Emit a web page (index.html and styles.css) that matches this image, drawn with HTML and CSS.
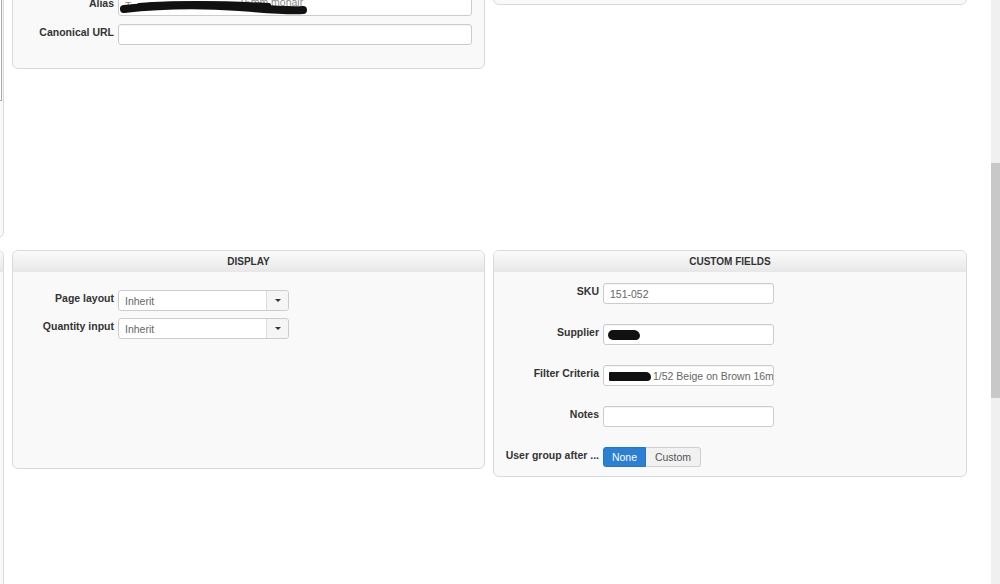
FILE: index.html
```html
<!DOCTYPE html>
<html lang="en">

<head>
  <meta charset="UTF-8">
  <meta name="viewport" content="width=device-width, initial-scale=1.0">
  <title>Product settings</title>
  <link rel="stylesheet" href="styles.css">
</head>

<body>
  <div class="page">
    <!-- top row: panels are scrolled partly out of view -->
    <div class="columns row-top">
      <div class="panel panel-stub-top">
        <div class="stub-textarea"></div>
      </div>

      <div class="panel panel-seo">
        <div class="field">
          <label class="field-label">Alias</label>
          <div class="input input-wide">
            <span class="faint">Tan</span>
            <span class="faint alias-tail">16mm mohair</span>
            <svg class="scribble" width="190" height="20" viewBox="0 0 190 20">
              <path d="M5 13 C 40 9, 80 8, 120 11 S 168 15, 184 14" stroke="#111" stroke-width="8" fill="none" stroke-linecap="round" />
              <path d="M20 9 C 60 6, 110 7, 150 9" stroke="#111" stroke-width="4" fill="none" stroke-linecap="round" />
            </svg>
          </div>
        </div>
        <div class="field">
          <label class="field-label">Canonical URL</label>
          <div class="input input-wide"></div>
        </div>
      </div>

      <div class="panel panel-right-top"></div>
    </div>

    <!-- bottom row -->
    <div class="columns row-bottom">
      <div class="panel panel-stub-bottom">
        <div class="panel-header"></div>
      </div>

      <div class="panel panel-display">
        <div class="panel-header">DISPLAY</div>
        <div class="panel-body display-body">
          <div class="field field-tight">
            <label class="field-label">Page layout</label>
            <div class="select">
              <span class="select-value">Inherit</span>
              <span class="select-caret"></span>
            </div>
          </div>
          <div class="field field-tight">
            <label class="field-label">Quantity input</label>
            <div class="select">
              <span class="select-value">Inherit</span>
              <span class="select-caret"></span>
            </div>
          </div>
        </div>
      </div>

      <div class="panel panel-custom">
        <div class="panel-header">CUSTOM FIELDS</div>
        <div class="panel-body custom-body">
          <div class="field field-loose">
            <label class="field-label label-custom">SKU</label>
            <div class="input">151-052</div>
          </div>
          <div class="field field-loose">
            <label class="field-label label-custom">Supplier</label>
            <div class="input"><span class="redact redact-supplier"></span></div>
          </div>
          <div class="field field-loose">
            <label class="field-label label-custom">Filter Criteria</label>
            <div class="input"><span class="redact redact-filter"></span>1/52 Beige on Brown 16mm</div>
          </div>
          <div class="field field-loose">
            <label class="field-label label-custom">Notes</label>
            <div class="input"></div>
          </div>
          <div class="field">
            <label class="field-label label-custom">User group after ...</label>
            <div class="btn-group">
              <button class="btn btn-active">None</button>
              <button class="btn btn-custom">Custom</button>
            </div>
          </div>
        </div>
      </div>
    </div>
  </div>

  <div class="scrollbar">
    <div class="scrollbar-thumb"></div>
  </div>
</body>

</html>
```

FILE: styles.css
```css
/* page */
body {
  margin: 0;
  height: 584px;
  display: flex;
  overflow: hidden;
  background-color: #fff;
  font-family: "Liberation Sans", Arial, sans-serif;
  color: #333;
}

.page {
  flex: 1;
  overflow: hidden;
}

/* scrollbar */
.scrollbar {
  width: 9px;
  background-color: #f0f0f0;
}

.scrollbar-thumb {
  margin-top: 163px;
  height: 235px;
  background-color: #c8c8c8;
}

/* columns */
.columns {
  display: grid;
  grid-template-columns: 400px 473px 474px;
  column-gap: 8px;
  align-items: start;
  margin-left: -396px;
}

.row-top {
  margin-top: -150px;
}

.row-bottom {
  margin-top: 12px;
}

/* panels */
.panel {
  box-sizing: border-box;
  background-color: #f9f9f9;
  border: 1px solid #dadada;
  border-radius: 6px;
  overflow: hidden;
}

.panel-stub-top {
  height: 388px;
  padding-top: 100px;
}

.stub-textarea {
  height: 148px;
  margin-right: 1px;
  background-color: #fff;
  border: 1px solid #a8a8a8;
}

.panel-stub-bottom {
  height: 400px;
}

.panel-seo {
  height: 219px;
  display: flex;
  flex-direction: column;
  justify-content: flex-end;
  padding-bottom: 23px;
}

.panel-right-top {
  height: 155px;
}

.panel-display {
  height: 219px;
}

.panel-custom {
  height: 227px;
}

.panel-header {
  height: 21px;
  line-height: 22px;
  text-align: center;
  font-size: 10px;
  font-weight: bold;
  color: #333;
  background: linear-gradient(#fbfbfb, #e7e7e7);
}

.display-body {
  padding-top: 18px;
}

.custom-body {
  padding-top: 11px;
}

/* fields */
.field {
  display: flex;
  align-items: flex-start;
}

.panel-seo .field + .field {
  margin-top: 8px;
}

.field-tight {
  margin-bottom: 7px;
}

.field-loose {
  margin-bottom: 20px;
}

.field-label {
  width: 101px;
  margin-right: 4px;
  padding-top: 2px;
  line-height: 12px;
  text-align: right;
  font-size: 10.5px;
  font-weight: bold;
  white-space: nowrap;
}

.label-custom {
  width: 105px;
}

.input {
  position: relative;
  box-sizing: border-box;
  width: 171px;
  height: 21px;
  padding: 0 6px;
  line-height: 20px;
  font-size: 10.5px;
  color: #666;
  white-space: nowrap;
  overflow: hidden;
  background-color: #fff;
  border: 1px solid #ccc;
  border-radius: 3px;
  box-shadow: inset 0 1px 1px rgba(0, 0, 0, 0.05);
}

.input-wide {
  width: 354px;
}

.faint {
  color: #888;
}

.alias-tail {
  position: absolute;
  left: 120px;
  top: -4px;
}

.scribble {
  position: absolute;
  left: 0;
  top: 0;
}

.redact {
  display: inline-block;
  vertical-align: middle;
  margin-right: 2px;
  margin-top: -2px;
  background-color: #111;
}

.redact-supplier {
  width: 32px;
  height: 10px;
  margin-left: -2px;
  border-radius: 6px 7px 5px 6px;
}

.redact-filter {
  width: 42px;
  height: 9px;
  margin-left: -1px;
  border-radius: 1px 5px 4px 1px;
}

/* select */
.select {
  box-sizing: border-box;
  display: flex;
  width: 171px;
  height: 21px;
  background-color: #fff;
  border: 1px solid #ccc;
  border-radius: 3px;
}

.select-value {
  flex: 1;
  padding-left: 6px;
  line-height: 20px;
  font-size: 10.5px;
  color: #666;
}

.select-caret {
  position: relative;
  width: 21px;
  background-color: #f5f5f5;
  border-left: 1px solid #ddd;
  border-radius: 0 3px 3px 0;
}

.select-caret::after {
  content: "";
  position: absolute;
  left: 8px;
  top: 8px;
  border-left: 3px solid transparent;
  border-right: 3px solid transparent;
  border-top: 3px solid #333;
}

/* button group */
.btn-group {
  display: flex;
}

.btn {
  box-sizing: border-box;
  height: 20px;
  padding: 0;
  font-family: "Liberation Sans", Arial, sans-serif;
  font-size: 10.5px;
  cursor: pointer;
}

.btn-active {
  width: 43px;
  color: #fff;
  background-color: #2b7fd4;
  border: 1px solid #2873c4;
  border-radius: 3px 0 0 3px;
}

.btn-custom {
  width: 55px;
  color: #555;
  background-color: #f1f1f1;
  border: 1px solid #cfcfcf;
  border-left: none;
  border-radius: 0 3px 3px 0;
}
```
